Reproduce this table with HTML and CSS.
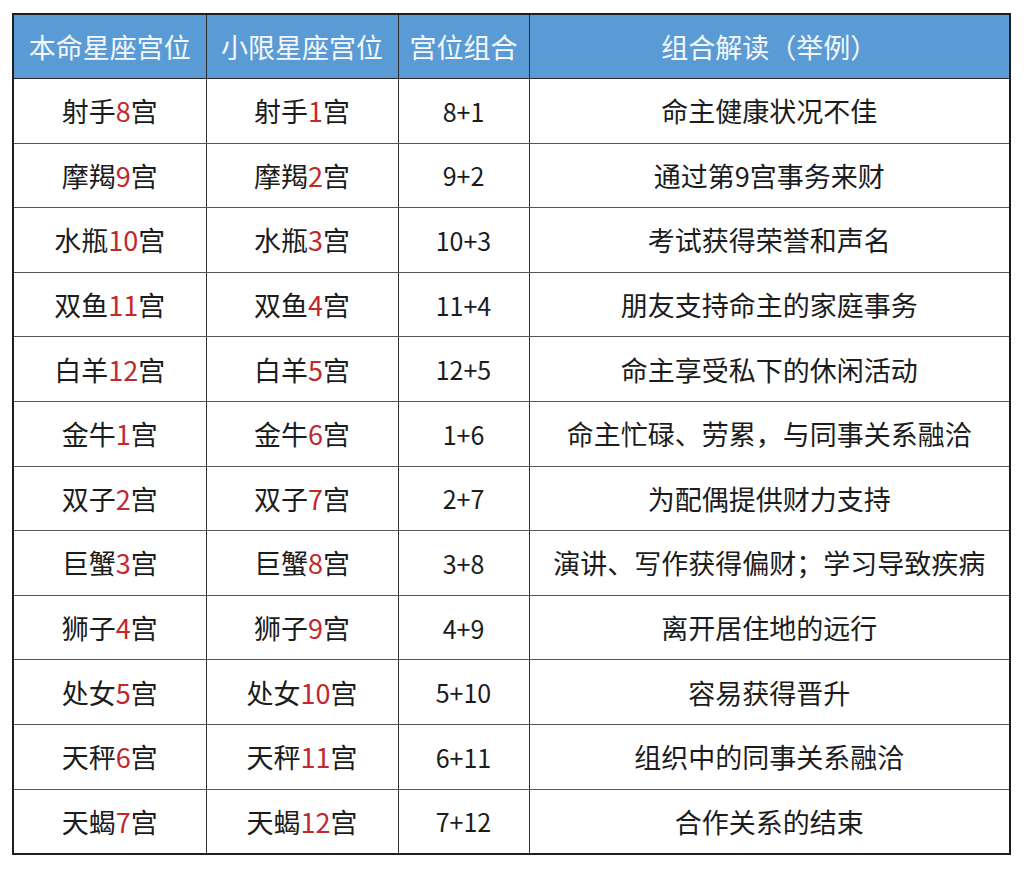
FILE: index.html
```html
<!DOCTYPE html>
<html lang="zh-CN">
<head>
<meta charset="utf-8">
<title>星座宫位组合</title>
<link rel="stylesheet" href="styles.css">
</head>
<body>
<div class="wrap">
<table class="grid">
  <colgroup>
    <col class="c1"><col class="c2"><col class="c3"><col class="c4">
  </colgroup>
  <thead>
    <tr><th>本命星座宫位</th><th>小限星座宫位</th><th>宫位组合</th><th>组合解读（举例）</th></tr>
  </thead>
  <tbody>
    <tr><td>射手<span class="n">8</span>宫</td><td>射手<span class="n">1</span>宫</td><td>8+1</td><td>命主健康状况不佳</td></tr>
    <tr><td>摩羯<span class="n">9</span>宫</td><td>摩羯<span class="n">2</span>宫</td><td>9+2</td><td>通过第9宫事务来财</td></tr>
    <tr><td>水瓶<span class="n">10</span>宫</td><td>水瓶<span class="n">3</span>宫</td><td>10+3</td><td>考试获得荣誉和声名</td></tr>
    <tr><td>双鱼<span class="n">11</span>宫</td><td>双鱼<span class="n">4</span>宫</td><td>11+4</td><td>朋友支持命主的家庭事务</td></tr>
    <tr><td>白羊<span class="n">12</span>宫</td><td>白羊<span class="n">5</span>宫</td><td>12+5</td><td>命主享受私下的休闲活动</td></tr>
    <tr><td>金牛<span class="n">1</span>宫</td><td>金牛<span class="n">6</span>宫</td><td>1+6</td><td>命主忙碌、劳累，与同事关系融洽</td></tr>
    <tr><td>双子<span class="n">2</span>宫</td><td>双子<span class="n">7</span>宫</td><td>2+7</td><td>为配偶提供财力支持</td></tr>
    <tr><td>巨蟹<span class="n">3</span>宫</td><td>巨蟹<span class="n">8</span>宫</td><td>3+8</td><td>演讲、写作获得偏财；学习导致疾病</td></tr>
    <tr><td>狮子<span class="n">4</span>宫</td><td>狮子<span class="n">9</span>宫</td><td>4+9</td><td>离开居住地的远行</td></tr>
    <tr><td>处女<span class="n">5</span>宫</td><td>处女<span class="n">10</span>宫</td><td>5+10</td><td>容易获得晋升</td></tr>
    <tr><td>天秤<span class="n">6</span>宫</td><td>天秤<span class="n">11</span>宫</td><td>6+11</td><td>组织中的同事关系融洽</td></tr>
    <tr><td>天蝎<span class="n">7</span>宫</td><td>天蝎<span class="n">12</span>宫</td><td>7+12</td><td>合作关系的结束</td></tr>
  </tbody>
</table>
</div>
</body>
</html>
```

FILE: styles.css
```css
html, body {
  margin: 0;
  padding: 0;
  background: #ffffff;
}
.wrap {
  padding: 13px 0 0 12px;
}
.grid {
  border-collapse: collapse;
  width: 997px;
  table-layout: fixed;
  font-family: "Noto Sans CJK SC", "Noto Sans", sans-serif;
  font-size: 27px;
  color: #1c1c1c;
  border: 2px solid #1e1e1e;
}
.c1 { width: 193px; }
.c2 { width: 192px; }
.c3 { width: 131px; }
.c4 { width: 481px; }
.grid th {
  background: #5b9bd5;
  color: #f4f8fc;
  font-weight: 400;
  height: 63px;
  padding: 0;
  text-align: center;
  border: 1.5px solid #2a2a2a;
  font-size: 27px;
}
.grid td {
  height: 63.6px;
  padding: 0;
  text-align: center;
  border: 1.5px solid #333333;
  border-top-color: #555555;
  border-bottom-color: #555555;
}
.grid td:nth-child(3) {
  font-size: 25px;
}
.n {
  color: #c0282e;
}
```
